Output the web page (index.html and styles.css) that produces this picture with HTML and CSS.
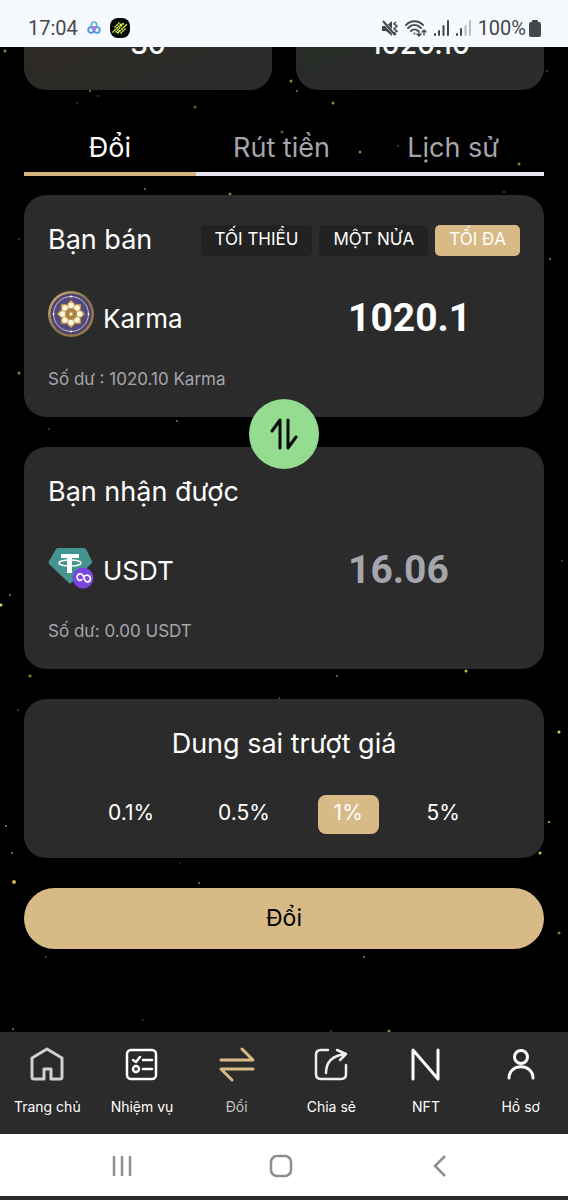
FILE: index.html
```html
<!DOCTYPE html>
<html lang="vi">
<head>
    <meta charset="UTF-8">
    <meta name="viewport" content="width=device-width, initial-scale=1.0">
    <title>Đổi Karma</title>
    <link rel="stylesheet" href="styles.css">
</head>
<body>
    <header class="status-bar">
        <div class="status-left">
            <span>17:04</span>
            <svg width="14" height="14" viewBox="0 0 14 14" fill="none" stroke-width="1.8">
                <circle cx="7" cy="4" r="2.8" stroke="#5ab4de"/>
                <circle cx="4" cy="9" r="2.8" stroke="#4a8fe0"/>
                <circle cx="10" cy="9" r="2.8" stroke="#4a9be0"/>
                <circle cx="7" cy="7.500" r="1.500" stroke="#b07be0"/>
            </svg>
            <svg width="20" height="20" viewBox="0 0 20 20">
                <rect width="20" height="20" rx="8" fill="#050805"/>
                <g stroke="#d5ee55" stroke-width="1.600" stroke-linecap="round" stroke-dasharray=".6 2">
                    <path d="M5 9l4-4M3 14l9-9M6 14l8-9M8 15l9-9M11 15l4-4"/>
                </g>
                <path d="M3 14l5-5M12 11l5-5M7 15l3-3M10 8l3-3" stroke="#d5ee55"/>
            </svg>
        </div>
        <div class="status-right">
            <svg width="16" height="17" viewBox="0 0 16 17">
                <path d="M0 6h4l6-5v15l-6-5H0z" fill="#45474b"/>
                <path d="M0 0l14 16" stroke="#f6f9fe" stroke-width="3"/>
                <path d="M1 1l12 14" stroke="#45474b" stroke-width="2"/>
                <path d="M14 2l-2 2 3 2-3 3 3 2-3 2 2 2" fill="none" stroke="#45474b" stroke-width="1.500"/>
            </svg>
            <svg width="22" height="17" viewBox="0 0 22 17" fill="none" stroke="#45474b" stroke-width="1.800" stroke-linecap="round">
                <path d="M1 5c5-5 12-5 17 0M3 8c4-4 9-4 13 0M6 11c2-2 5-2 7 0"/>
                <circle cx="9.500" cy="13.500" r="1" fill="#45474b" stroke="none"/>
                <path d="M14 11v5m-2-2l2 2 2-2M19 15v-5m-2 2l2-2 2 2" stroke-width="1.400"/>
            </svg>
            <svg width="15" height="16" viewBox="0 0 15 16" stroke="#45474b" stroke-width="2" stroke-linecap="round">
                <path d="M1 14v1M5 11v4M9.500 6v9M14 1v14"/>
            </svg>
            <svg width="15" height="16" viewBox="0 0 15 16" stroke="#45474b" stroke-width="2" stroke-linecap="round">
                <path d="M1 14v1M5 9v6"/>
                <path d="M9.500 6v9M14 1v14" stroke="#b9bbc0"/>
            </svg>
            <span class="battery-text">100%</span>
            <svg width="12" height="17" viewBox="0 0 12 17" fill="#45474b">
                <rect x="3" y="0" width="6" height="4" rx="1"/>
                <rect x="0" y="2" width="12" height="15" rx="2"/>
            </svg>
        </div>
    </header>

    <main>
        <svg class="stars" viewBox="0 0 568 985" preserveAspectRatio="xMidYMin slice" fill="#8f8136">
            <circle cx="5" cy="4" r="1.500"/><circle cx="90" cy="44" r="1"/><circle cx="98" cy="49" r="1" opacity=".5"/>
            <circle cx="77" cy="56" r="1" opacity=".4"/><circle cx="195" cy="60" r="1.500" opacity=".7"/>
            <circle cx="291" cy="34" r="1.500"/><circle cx="297" cy="44" r="1"/><circle cx="333" cy="56" r="1.500"/>
            <circle cx="547" cy="24" r="1" opacity=".6"/><circle cx="360" cy="105" r="1.500"/><circle cx="398" cy="99" r="1" opacity=".6"/>
            <circle cx="282" cy="85" r="1.500" opacity=".7"/><circle cx="519" cy="117" r="1.500"/><circle cx="145" cy="142" r="1"/>
            <circle cx="230" cy="147" r="1.500"/><circle cx="504" cy="145" r="1" opacity=".6"/><circle cx="19" cy="192" r="1" opacity=".5"/>
            <circle cx="19" cy="326" r="1.500"/><circle cx="550" cy="212" r="1"/><circle cx="177" cy="374" r="1"/>
            <circle cx="49" cy="382" r="1" opacity=".5"/><circle cx="1" cy="558" r="1.500" fill="#e0d15a"/><circle cx="10" cy="548" r="1"/>
            <circle cx="562" cy="514" r="1" opacity=".6"/><circle cx="30" cy="629" r="1.500"/><circle cx="337" cy="629" r="1"/>
            <circle cx="466" cy="624" r="1.500" fill="#c6b848"/><circle cx="18" cy="663" r="1" opacity=".6"/><circle cx="559" cy="685" r="1.500" fill="#e0d15a"/>
            <circle cx="279" cy="651" r="1" opacity=".6"/><circle cx="6" cy="779" r="1"/><circle cx="549" cy="775" r="1" fill="#e0d15a"/>
            <circle cx="12" cy="806" r="1"/><circle cx="540" cy="806" r="1.500" fill="#d6c648"/><circle cx="14" cy="835" r="2" fill="#c6b848"/>
            <circle cx="199" cy="836" r="1"/><circle cx="180" cy="816" r="1" opacity=".3"/><circle cx="559" cy="886" r="1.500"/>
            <circle cx="46" cy="910" r="1" opacity=".6"/><circle cx="364" cy="910" r="1"/><circle cx="13" cy="982" r="1"/>
            <circle cx="389" cy="984" r="1.500"/><circle cx="331" cy="984" r="1" opacity=".6"/><circle cx="143" cy="973" r="1" opacity=".4"/>
        </svg>

        <div class="stats">
            <div class="stat stat-gold">30</div>
            <div class="stat stat-green">1020.10</div>
        </div>

        <div class="tabs">
            <button class="tab active" type="button">Đổi</button>
            <button class="tab" type="button">Rút tiền</button>
            <button class="tab" type="button">Lịch sử</button>
        </div>

        <form class="swap-form">
            <section class="card">
                <div class="card-head">
                    <label class="card-title" for="sell-amount">Bạn bán</label>
                    <div class="quick">
                        <button type="button">TỐI THIỂU</button>
                        <button type="button">MỘT NỬA</button>
                        <button class="active" type="button">TỐI ĐA</button>
                    </div>
                </div>
                <div class="token-row">
                    <div class="token">
                        <svg width="46" height="46" viewBox="0 0 46 46">
                            <defs>
                                <linearGradient id="rim" x1="0" y1="0" x2="1" y2="1">
                                    <stop offset="0" stop-color="#d2b777"/>
                                    <stop offset=".5" stop-color="#8a7252"/>
                                    <stop offset="1" stop-color="#a07a48"/>
                                </linearGradient>
                                <path id="petal" d="M23 22c-7-4-6-8 0-13 6 5 7 9 0 13z"/>
                            </defs>
                            <circle cx="23" cy="23" r="23" fill="url(#rim)"/>
                            <circle cx="23" cy="23" r="20.500" fill="#4c426d"/>
                            <circle cx="23" cy="23" r="17.500" fill="#554a7c" stroke="#c9c3d6" stroke-width="1"/>
                            <g fill="#d0a963" stroke="#7c6341" stroke-width=".5">
                                <use href="#petal"/>
                                <use href="#petal" transform="rotate(45 23 23)"/>
                                <use href="#petal" transform="rotate(90 23 23)"/>
                                <use href="#petal" transform="rotate(135 23 23)"/>
                                <use href="#petal" transform="rotate(180 23 23)"/>
                                <use href="#petal" transform="rotate(225 23 23)"/>
                                <use href="#petal" transform="rotate(270 23 23)"/>
                                <use href="#petal" transform="rotate(315 23 23)"/>
                            </g>
                            <g fill="#fff4dc">
                                <circle cx="23" cy="14.500" r="2.800"/><circle cx="23" cy="31.500" r="2.800"/>
                                <circle cx="14.500" cy="23" r="2.800"/><circle cx="31.500" cy="23" r="2.800"/>
                                <circle cx="17" cy="17" r="2.800"/><circle cx="29" cy="17" r="2.800"/>
                                <circle cx="17" cy="29" r="2.800"/><circle cx="29" cy="29" r="2.800"/>
                                <circle cx="23" cy="5.500" r="1"/><circle cx="23" cy="40.500" r="1"/>
                                <circle cx="5.500" cy="23" r="1"/><circle cx="40.500" cy="23" r="1"/>
                            </g>
                            <circle cx="23" cy="23" r="6" fill="#b88c4b"/>
                            <circle cx="23" cy="23" r="3.500" fill="#caa15c" stroke="#8d6a3a"/>
                            <circle cx="23" cy="23" r="1.200" fill="#fff"/>
                        </svg>
                        <span>Karma</span>
                    </div>
                    <input class="amount" id="sell-amount" type="text" inputmode="decimal" value="1020.1">
                </div>
                <p class="balance">Số dư : 1020.10 Karma</p>
            </section>

            <button class="swap-button" type="button" aria-label="Đảo chiều">
                <svg width="28" height="32" viewBox="0 0 28 32" fill="none" stroke="#0a0a0a" stroke-width="3" stroke-linecap="round" stroke-linejoin="round">
                    <path d="M2 13l8-11v28M18 2v28l8-11"/>
                </svg>
            </button>

            <section class="card">
                <div class="card-head">
                    <label class="card-title" for="buy-amount">Bạn nhận được</label>
                </div>
                <div class="token-row">
                    <div class="token">
                        <svg width="46" height="46" viewBox="0 0 46 46">
                            <path d="M10 5h26q1 0 2 1l6 12q1 1-1 3L23 40q-1 1-2 0L1 21q-1-2 0-3L8 6q1-1 2-1z" fill="#439590"/>
                            <path d="M13 11h18v4h-7v15h-5V15h-6z" fill="#fff"/>
                            <ellipse cx="22" cy="20" rx="11" ry="3" fill="none" stroke="#fff" stroke-width="1.500"/>
                            <circle cx="35" cy="35" r="10.500" fill="#7947dc"/>
                            <path d="M34 36.500l-2 1q-3-.5-3-4 1-3 4-2.500 2 .5 3 4t3 4q3 0 3.500-3 0-3-3-4l-3 1" fill="none" stroke="#fff" stroke-width="1.600" stroke-linecap="round" stroke-linejoin="round"/>
                        </svg>
                        <span>USDT</span>
                    </div>
                    <input class="amount muted" id="buy-amount" type="text" value="16.06" readonly>
                </div>
                <p class="balance">Số dư: 0.00 USDT</p>
            </section>

            <section class="card slippage">
                <h2 class="card-title">Dung sai trượt giá</h2>
                <div class="slippage-options">
                    <button type="button">0.1%</button>
                    <button type="button">0.5%</button>
                    <button class="active" type="button">1%</button>
                    <button type="button">5%</button>
                </div>
            </section>

            <button class="submit" type="submit">Đổi</button>
        </form>
    </main>

    <nav class="bottom-nav">
        <a href="#home">
            <svg width="36" height="36" viewBox="0 0 36 36" fill="none" stroke="#d0d0d0" stroke-width="3" stroke-linejoin="round">
                <path d="M3 12L18 3l15 9v19q0 2-2 2h-9V23h-7v10H5q-2 0-2-2z"/>
            </svg>
            <span>Trang chủ</span>
        </a>
        <a href="#tasks">
            <svg width="36" height="36" viewBox="0 0 36 36" fill="none" stroke="#fff" stroke-width="2.500" stroke-linecap="round" stroke-linejoin="round">
                <rect x="3" y="4" width="29" height="29" rx="4"/>
                <path d="M9 14l3 2 4-5M19 14h9M19 23h9"/>
                <circle cx="12" cy="23" r="3"/>
            </svg>
            <span>Nhiệm vụ</span>
        </a>
        <a class="current" href="#swap">
            <svg width="36" height="36" viewBox="0 0 36 36" fill="none" stroke="#d8ba86" stroke-width="3" stroke-linecap="round" stroke-linejoin="round">
                <path d="M2 14h32L23 3M34 23H2l11 11"/>
            </svg>
            <span>Đổi</span>
        </a>
        <a href="#share">
            <svg width="36" height="36" viewBox="0 0 36 36" fill="none" stroke="#eee" stroke-width="2.500" stroke-linecap="round" stroke-linejoin="round">
                <path d="M15 4H8q-5 0-5 5v19q0 5 5 5h20q5 0 5-5v-9"/>
                <path d="M13 27q0-17 20-19M24 4l9 4-6 6"/>
            </svg>
            <span>Chia sẻ</span>
        </a>
        <a href="#nft">
            <svg width="36" height="36" viewBox="0 0 36 36" fill="none" stroke="#fff" stroke-width="3" stroke-linecap="round" stroke-linejoin="round">
                <path d="M5 33V4l25 29V4"/>
            </svg>
            <span>NFT</span>
        </a>
        <a href="#profile">
            <svg width="36" height="36" viewBox="0 0 36 36" fill="none" stroke="#fff" stroke-width="3" stroke-linecap="round">
                <circle cx="18" cy="11" r="6.500"/>
                <path d="M6 32c0-15 24-15 24 0"/>
            </svg>
            <span>Hồ sơ</span>
        </a>
    </nav>

    <footer class="system-nav">
        <button type="button" aria-label="Gần đây">
            <svg width="22" height="22" viewBox="0 0 22 22" stroke="#8e8e8e" stroke-width="2.500" stroke-linecap="round">
                <path d="M3 2v18M11 2v18M19 2v18"/>
            </svg>
        </button>
        <button type="button" aria-label="Trang đầu">
            <svg width="24" height="24" viewBox="0 0 24 24" fill="none" stroke="#8e8e8e" stroke-width="2.500">
                <rect x="2" y="2" width="20" height="20" rx="6"/>
            </svg>
        </button>
        <button type="button" aria-label="Quay lại">
            <svg width="22" height="22" viewBox="0 0 22 22" fill="none" stroke="#8e8e8e" stroke-width="2.500">
                <path d="M16 1L6 11l10 10"/>
            </svg>
        </button>
    </footer>
</body>
</html>
```
FILE: styles.css
```css
* {
    box-sizing: border-box;
}

body {
    margin: 0;
    min-height: 100vh;
    display: flex;
    flex-direction: column;
    background-color: #000;
    color: #fff;
    font-family: Inter, "Noto Sans", sans-serif;
}

button, input {
    font-family: inherit;
    color: inherit;
    border: none;
    background: none;
    padding: 0;
}

button {
    cursor: pointer;
}

svg {
    display: block;
    flex: none;
}

/* phone status bar */
.status-bar {
    display: flex;
    justify-content: space-between;
    align-items: center;
    height: 47px;
    padding: 9px 27px 0 28px;
    background-color: #f6f9fe;
    color: #45474b;
    font-family: Roboto, sans-serif;
    font-size: 20px;
}

.status-left, .status-right {
    display: flex;
    align-items: center;
    gap: 7px;
}

.status-left {
    gap: 9px;
}

.battery-text {
    margin-right: -4px;
}

main {
    position: relative;
    flex: 1;
    padding: 0 24px 83px;
    overflow: hidden;
}

.stars {
    position: absolute;
    top: 0;
    left: 0;
    width: 100%;
    height: 100%;
    z-index: -1;
}

.stats {
    display: grid;
    grid-template-columns: 1fr 1fr;
    gap: 24px;
}

.stat {
    display: flex;
    align-items: flex-end;
    justify-content: center;
    height: 43px;
    padding-bottom: 30px;
    overflow: hidden;
    border-radius: 0 0 22px 22px;
    background-color: #2b2b2b;
    font-size: 28px;
    font-weight: 500;
    line-height: 32px;
}

.stat-gold {
    background-image: linear-gradient(160deg, #2d2a25, #2c2c2c);
}

.stat-green {
    background-image: linear-gradient(160deg, #272c26, #2c2c2c 60%);
}

.tabs {
    display: grid;
    grid-template-columns: repeat(3, 1fr);
    margin-top: 30px;
    margin-bottom: 19px;
    padding-right: 5px;
    border-bottom: 4px solid #e9e6f5;
}

.tab {
    height: 52px;
    padding-top: 2px;
    color: #a5a6ad;
    font-size: 27px;
}

.tab.active {
    height: 56px;
    margin-bottom: -4px;
    border-bottom: 4px solid #d4b57f;
    color: #fff;
}

.swap-form {
    display: flex;
    flex-direction: column;
}

.card {
    padding: 24px;
    border-radius: 22px;
    background-color: #2b2b2b;
}

.card-head {
    display: flex;
    justify-content: space-between;
    align-items: center;
    height: 42px;
}

.card-title {
    margin: 0;
    font-size: 27px;
    font-weight: 400;
    line-height: 42px;
}

.quick {
    display: flex;
    gap: 7px;
}

.quick button {
    height: 31px;
    padding: 0 14px 2px;
    border-radius: 5px;
    background-color: #222;
    font-size: 17px;
}

.quick button.active,
.slippage-options button.active {
    background-color: #d8ba86;
}

.token-row {
    display: flex;
    justify-content: space-between;
    align-items: center;
    height: 54px;
    margin-top: 30px;
}

.token {
    display: flex;
    align-items: center;
    gap: 9px;
    font-size: 26px;
}

.token svg {
    margin-bottom: 8px;
}

.amount {
    width: 172px;
    outline: none;
    font-family: Roboto, sans-serif;
    font-size: 39px;
    font-weight: 700;
}

.amount.muted {
    color: #a5a6ad;
}

.balance {
    margin: 20px 0 0;
    color: #a5a6ad;
    font-size: 17px;
    line-height: 28px;
}

.swap-button {
    display: flex;
    align-items: center;
    justify-content: center;
    align-self: center;
    width: 70px;
    height: 70px;
    margin: -18px 0 -22px;
    border-radius: 50%;
    background-color: #93dc90;
    z-index: 1;
}

.slippage {
    margin-top: 30px;
    text-align: center;
}

.slippage-options {
    display: flex;
    justify-content: space-between;
    padding: 0 44px;
    margin-top: 30px;
}

.slippage-options button {
    height: 39px;
    padding: 0 16px 4px;
    border-radius: 8px;
    font-size: 21px;
}

.submit {
    height: 61px;
    margin-top: 30px;
    padding-bottom: 2px;
    border-radius: 31px;
    background-color: #d8ba86;
    color: #000;
    font-size: 23px;
}

.bottom-nav {
    display: grid;
    grid-template-columns: repeat(6, 1fr);
    height: 102px;
    padding-top: 14px;
    background-color: #2b2b2b;
}

.bottom-nav a {
    display: flex;
    flex-direction: column;
    align-items: center;
    gap: 15px;
    color: #fff;
    font-size: 14px;
    line-height: 20px;
    text-decoration: none;
    white-space: nowrap;
}

.bottom-nav .current {
    color: #c4c4c4;
}

.system-nav {
    display: grid;
    grid-template-columns: repeat(3, 1fr);
    align-items: center;
    justify-items: center;
    height: 66px;
    padding: 2px 48px 0 42px;
    border-bottom: 4px solid #2b2b2b;
    background-color: #fff;
}
```
